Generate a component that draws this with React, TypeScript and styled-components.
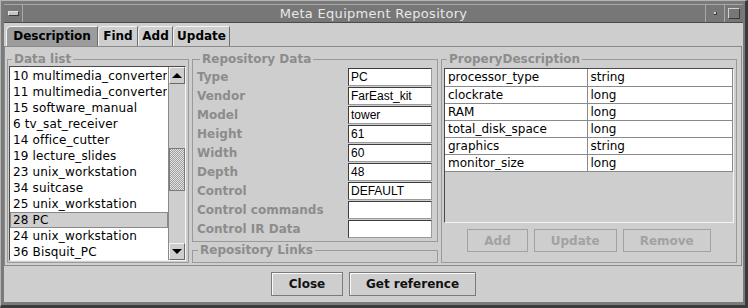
import React from 'react';
import styled, { createGlobalStyle } from 'styled-components';

const GlobalStyle = createGlobalStyle`
  html, body { margin: 0; padding: 0; background: #7a7a7a; }
  body { font-family: "DejaVu Sans", sans-serif; font-size: 12px; }
  * { box-sizing: border-box; }
`;

const Frame = styled.div`
  width: 748px;
  height: 308px;
  display: flex;
  flex-direction: column;
  background: #7a7a7a;
  border-top: 1px solid #b4b4b4;
  border-left: 1px solid #b4b4b4;
  border-right: 3px solid #3a3a3a;
  border-bottom: 3px solid #3a3a3a;
  padding: 3px 2px 3px 3px;
`;

const TitleBar = styled.div`
  height: 19px;
  flex: none;
  display: grid;
  grid-template-columns: 1fr auto 1fr;
  align-items: stretch;
  background: #777777;
  border-top: 1px solid #a8a8a8;
  border-bottom: 1px solid #4a4a4a;
`;

const MenuButton = styled.div`
  justify-self: start;
  width: 19px;
  display: flex;
  align-items: center;
  justify-content: center;
  border-right: 1px solid #a8a8a8;
`;

const MenuBar = styled.div`
  width: 11px;
  height: 5px;
  background: #c4c4c4;
  border-top: 1px solid #e0e0e0;
  border-left: 1px solid #e0e0e0;
  border-right: 1px solid #3a3a3a;
  border-bottom: 1px solid #3a3a3a;
`;

const Title = styled.div`
  color: #e8e8e8;
  font-size: 13px;
  letter-spacing: 0.3px;
  line-height: 17px;
  white-space: nowrap;
`;

const WinButtons = styled.div`
  justify-self: end;
  display: flex;
`;

const WinButton = styled.div`
  width: 19px;
  display: flex;
  align-items: center;
  justify-content: center;
  border-left: 1px solid #a8a8a8;
`;

const MinGlyph = styled.div`
  width: 3px;
  height: 3px;
  background: #d0d0d0;
  border-right: 1px solid #3a3a3a;
  border-bottom: 1px solid #3a3a3a;
`;

const MaxGlyph = styled.div`
  width: 12px;
  height: 11px;
  border-top: 1px solid #d0d0d0;
  border-left: 1px solid #d0d0d0;
  border-right: 1px solid #3a3a3a;
  border-bottom: 1px solid #3a3a3a;
`;

const Client = styled.div`
  flex: 1;
  display: flex;
  flex-direction: column;
  background: #cecece;
`;

const TabStrip = styled.div`
  display: flex;
  height: 20px;
  margin-top: 3px;
  padding-left: 2px;
`;

const Tab = styled.div<{ $selected?: boolean; $w: number }>`
  width: ${p => p.$w}px;
  height: 20px;
  line-height: 19px;
  text-align: center;
  font-weight: bold;
  font-size: 12px;
  color: #000;
  background: ${p => (p.$selected ? '#9c9c9c' : '#cecece')};
  border-top: 1px solid #f2f2f2;
  border-left: 1px solid #f2f2f2;
  border-right: 1px solid #6e6e6e;
  border-top-left-radius: 5px;
  white-space: nowrap;
`;

const Pane = styled.div`
  height: 220px;
  margin-right: 1px;
  border: 1px solid #8a8a8a;
  padding: 5px 2px 2px 2px;
  display: grid;
  grid-template-columns: 182px 246px 296px;
  column-gap: 3px;
`;

const Group = styled.fieldset<{ $pad?: string }>`
  margin: 0;
  min-width: 0;
  border: 1px solid #9a9a9a;
  padding: ${p => p.$pad || '0 2px 1px 1px'};
  display: flex;
  flex-direction: column;
`;

const Legend = styled.legend`
  padding: 0 2px;
  margin-left: 3px;
  color: #8c8c8c;
  font-weight: bold;
  font-size: 12px;
  line-height: 14px;
`;

const ListBox = styled.div`
  flex: 1;
  display: flex;
  border-top: 1px solid #4a4a4a;
  border-left: 1px solid #4a4a4a;
  border-right: 1px solid #f4f4f4;
  border-bottom: 1px solid #f4f4f4;
  overflow: hidden;
`;

const ListBody = styled.div`
  flex: 1;
  min-width: 0;
  background: #fff;
  padding-top: 1px;
`;

const ListRow = styled.div<{ $selected?: boolean }>`
  height: 16px;
  line-height: 15px;
  padding-left: 2px;
  font-size: 12px;
  letter-spacing: 0.15px;
  color: #000;
  white-space: nowrap;
  overflow: hidden;
  background: ${p => (p.$selected ? '#cecece' : 'transparent')};
  border: 1px solid ${p => (p.$selected ? '#8a8a8a' : 'transparent')};
`;

const ScrollBar = styled.div`
  width: 17px;
  flex: none;
  display: flex;
  flex-direction: column;
  background: #cecece;
  border-left: 1px solid #8a8a8a;
`;

const ScrollButton = styled.div`
  height: 17px;
  flex: none;
  display: flex;
  align-items: center;
  justify-content: center;
  border-top: 1px solid #f4f4f4;
  border-left: 1px solid #f4f4f4;
  border-right: 1px solid #6a6a6a;
  border-bottom: 1px solid #6a6a6a;
`;

const Arrow = styled.div<{ $down?: boolean }>`
  width: 0;
  height: 0;
  border-left: 5px solid transparent;
  border-right: 5px solid transparent;
  ${p => (p.$down ? 'border-top: 5px solid #000;' : 'border-bottom: 5px solid #000;')}
`;

const Track = styled.div`
  flex: 1;
`;

const Thumb = styled.div`
  margin-top: 64px;
  height: 43px;
  border: 1px solid #7a7a7a;
  background-color: #a8a8a8;
  background-image: repeating-conic-gradient(#e2e2e2 0 25%, #a0a0a0 0 50%);
  background-size: 2px 2px;
`;

const Column = styled.div`
  display: flex;
  flex-direction: column;
  gap: 1px;
  min-width: 0;
`;

const FormGrid = styled.div`
  display: grid;
  grid-template-columns: 1fr 84px;
  grid-auto-rows: 18px;
  row-gap: 1px;
`;

const FieldLabel = styled.div`
  color: #8c8c8c;
  font-weight: bold;
  font-size: 12px;
  line-height: 18px;
  white-space: nowrap;
`;

const Field = styled.div`
  height: 18px;
  background: #fff;
  border: 1px solid #3c3c3c;
  border-right-color: #9a9a9a;
  border-bottom-color: #9a9a9a;
  padding: 0 2px;
  font-family: "Liberation Sans", Arial, sans-serif;
  font-size: 12px;
  line-height: 16px;
  color: #000;
  white-space: nowrap;
  overflow: hidden;
`;

const TableScroll = styled.div`
  height: 155px;
  flex: none;
  background: #cecece;
  border-top: 1px solid #4a4a4a;
  border-left: 1px solid #4a4a4a;
  border-right: 1px solid #f4f4f4;
  border-bottom: 1px solid #f4f4f4;
  overflow: hidden;
`;

const Table = styled.table`
  width: 100%;
  border-collapse: collapse;
  table-layout: fixed;
`;

const Cell = styled.td<{ $w?: number }>`
  ${p => (p.$w ? `width: ${p.$w}px;` : '')}
  height: 17px;
  padding: 0 3px;
  background: #fff;
  border-right: 1px solid #8a8a8a;
  border-bottom: 1px solid #8a8a8a;
  font-size: 12px;
  line-height: 16px;
  color: #000;
  white-space: nowrap;
  overflow: hidden;
`;

const ActionRow = styled.div`
  display: flex;
  justify-content: center;
  gap: 6px;
  margin-top: 6px;
`;

const DisabledButton = styled.button`
  height: 23px;
  padding: 0 16px;
  background: transparent;
  border: 1px solid #a2a2a2;
  color: #a2a2a2;
  font-family: "DejaVu Sans", sans-serif;
  font-weight: bold;
  font-size: 12px;
`;

const ButtonBar = styled.div`
  flex: 1;
  display: flex;
  justify-content: center;
  align-items: flex-start;
  gap: 6px;
  padding-top: 6px;
`;

const PushButton = styled.button<{ $w: number }>`
  width: ${p => p.$w}px;
  height: 24px;
  padding: 0;
  background: #cecece;
  border: 1px solid #7a7a7a;
  box-shadow: inset 1px 1px 0 #fafafa;
  color: #111;
  font-family: "DejaVu Sans", sans-serif;
  font-weight: bold;
  font-size: 12px;
`;

const items = [
  '10 multimedia_converter',
  '11 multimedia_converter',
  '15 software_manual',
  '6 tv_sat_receiver',
  '14 office_cutter',
  '19 lecture_slides',
  '23 unix_workstation',
  '34 suitcase',
  '25 unix_workstation',
  '28 PC',
  '24 unix_workstation',
  '36 Bisquit_PC',
];

const fields: [string, string][] = [
  ['Type', 'PC'],
  ['Vendor', 'FarEast_kit'],
  ['Model', 'tower'],
  ['Height', '61'],
  ['Width', '60'],
  ['Depth', '48'],
  ['Control', 'DEFAULT'],
  ['Control commands', ''],
  ['Control IR Data', ''],
];

const props: [string, string][] = [
  ['processor_type', 'string'],
  ['clockrate', 'long'],
  ['RAM', 'long'],
  ['total_disk_space', 'long'],
  ['graphics', 'string'],
  ['monitor_size', 'long'],
];

const tabs: [string, number][] = [
  ['Description', 92],
  ['Find', 40],
  ['Add', 35],
  ['Update', 57],
];

const App = () => {
  return (
    <Frame>
      <GlobalStyle />
      <TitleBar>
        <MenuButton>
          <MenuBar />
        </MenuButton>
        <Title>Meta Equipment Repository</Title>
        <WinButtons>
          <WinButton>
            <MinGlyph />
          </WinButton>
          <WinButton>
            <MaxGlyph />
          </WinButton>
        </WinButtons>
      </TitleBar>
      <Client>
        <TabStrip>
          {tabs.map(([name, w], i) => (
            <Tab key={name} $w={w} $selected={i === 0}>{name}</Tab>
          ))}
        </TabStrip>
        <Pane>
          <Group>
            <Legend>Data list</Legend>
            <ListBox>
              <ListBody>
                {items.map(it => (
                  <ListRow key={it} $selected={it === '28 PC'}>{it}</ListRow>
                ))}
              </ListBody>
              <ScrollBar>
                <ScrollButton><Arrow /></ScrollButton>
                <Track><Thumb /></Track>
                <ScrollButton><Arrow $down /></ScrollButton>
              </ScrollBar>
            </ListBox>
          </Group>

          <Column>
            <Group $pad="2px 5px 3px 4px">
              <Legend>Repository Data</Legend>
              <FormGrid>
                {fields.map(([label, value]) => (
                  <React.Fragment key={label}>
                    <FieldLabel>{label}</FieldLabel>
                    <Field>{value}</Field>
                  </React.Fragment>
                ))}
              </FormGrid>
            </Group>
            <Group style={{ flex: 1 }} $pad="0 2px">
              <Legend>Repository Links</Legend>
            </Group>
          </Column>

          <Group $pad="2px 2px 6px 2px">
            <Legend>ProperyDescription</Legend>
            <TableScroll>
              <Table>
                <tbody>
                  {props.map(([name, type]) => (
                    <tr key={name}>
                      <Cell $w={142}>{name}</Cell>
                      <Cell>{type}</Cell>
                    </tr>
                  ))}
                </tbody>
              </Table>
            </TableScroll>
            <ActionRow>
              <DisabledButton disabled>Add</DisabledButton>
              <DisabledButton disabled>Update</DisabledButton>
              <DisabledButton disabled>Remove</DisabledButton>
            </ActionRow>
          </Group>
        </Pane>
        <ButtonBar>
          <PushButton $w={72}>Close</PushButton>
          <PushButton $w={127}>Get reference</PushButton>
        </ButtonBar>
      </Client>
    </Frame>
  );
};

export default App;
